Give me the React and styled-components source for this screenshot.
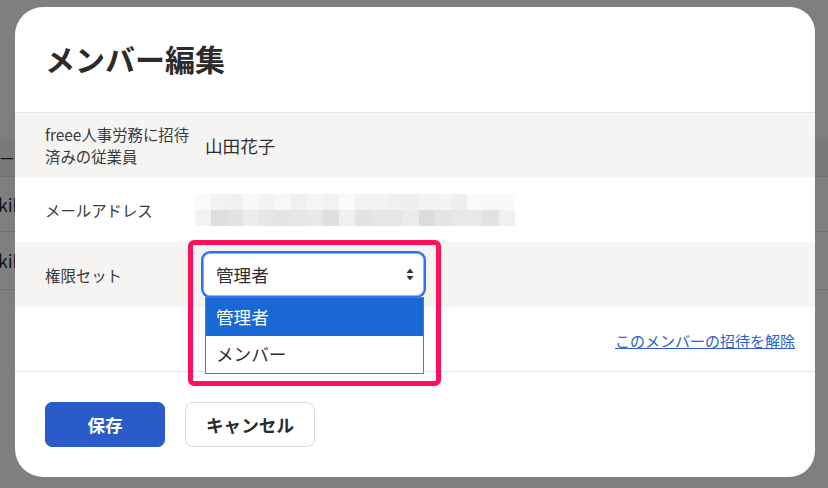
import styled, { createGlobalStyle } from "styled-components";

const GlobalStyle = createGlobalStyle`
  html, body {
    margin: 0;
    padding: 0;
    width: 828px;
    height: 488px;
    overflow: hidden;
    background: #ffffff;
    font-family: "Noto Sans CJK JP", "Noto Sans", sans-serif;
  }
`;

const Page = styled.div`
  padding-top: 139px;
  width: 828px;
  height: 488px;
  box-sizing: border-box;
`;

const BgRow = styled.div`
  display: flex;
  align-items: center;
  height: ${({ h }) => h}px;
  border-bottom: 1px solid #e2e2e2;
  background: ${({ head }) => (head ? "#f3f3f3" : "#ffffff")};
  color: #1c2a44;
  font-size: ${({ head }) => (head ? "15.4px" : "17.6px")};
  white-space: nowrap;
  overflow: hidden;
`;

const BgText = styled.span`
  margin-left: ${({ indent }) => indent}px;
`;

const Overlay = styled.div`
  position: fixed;
  inset: 0;
  background: rgba(0, 0, 0, 0.5);
  padding: 7px 13px 11px 15px;
  display: flex;
`;

const Modal = styled.div`
  width: 800px;
  height: 470px;
  background: #ffffff;
  border-radius: 28px 25px 26px 28px;
  display: flex;
  flex-direction: column;
`;

const Header = styled.div`
  height: 101px;
  padding: 0 30px 4px;
  display: flex;
  align-items: center;
  border-bottom: 1px solid #e6e6e6;
`;

const Title = styled.h1`
  margin: 0;
  font-size: 30px;
  font-weight: 700;
  color: #2b2b2b;
`;

const Row = styled.div`
  height: ${({ h }) => h}px;
  display: grid;
  grid-template-columns: 160px 1fr;
  align-items: center;
  padding-left: 30px;
  background: ${({ striped }) => (striped ? "#f5f4f2" : "#ffffff")};
`;

const Label = styled.div`
  font-size: 15.4px;
  line-height: 22px;
  color: #3a3a3a;
`;

const Value = styled.div`
  font-size: 17.6px;
  color: #2e2e2e;
`;

const Mosaic = styled.div`
  margin-left: -10px;
  display: grid;
  grid-template-columns: repeat(20, 16px);
  grid-auto-rows: 16px;
  width: 320px;
`;

const Tile = styled.div`
  background: ${({ c }) => c};
`;

const SelectWrap = styled.div`
  position: relative;
  margin-left: -2px;
  width: 221px;
  height: 43px;
`;

const SelectBox = styled.div`
  box-sizing: border-box;
  width: 100%;
  height: 100%;
  border: 1px solid #8ab4f8;
  border-radius: 7px;
  box-shadow: 0 0 0 2px #2f6ff0;
  background: #ffffff;
  display: flex;
  align-items: center;
  justify-content: space-between;
  padding: 0 9px 0 12px;
  font-size: 17.6px;
  color: #2e2e2e;
`;

const Options = styled.ul`
  position: absolute;
  top: 44px;
  left: 2px;
  width: 219px;
  margin: 0;
  padding: 0;
  list-style: none;
  border: 1px solid #767676;
  background: #ffffff;
  box-sizing: border-box;
  z-index: 2;
`;

const Option = styled.li`
  height: ${({ h }) => h}px;
  display: flex;
  align-items: center;
  padding: 0 0 2px 10px;
  box-sizing: border-box;
  font-size: 17.6px;
  background: ${({ active }) => (active ? "#1a68d3" : "#ffffff")};
  color: ${({ active }) => (active ? "#ffffff" : "#2e2e2e")};
`;

const Highlight = styled.div`
  position: absolute;
  left: -15px;
  top: -13px;
  width: 253px;
  height: 146px;
  box-sizing: border-box;
  border: 5px solid #ff105a;
  border-radius: 6px;
  z-index: 3;
  pointer-events: none;
`;

const LinkArea = styled.div`
  height: 65px;
  box-sizing: border-box;
  display: flex;
  align-items: center;
  justify-content: flex-end;
  padding: 2px 20px 0 0;
  border-bottom: 1px solid #e6e6e6;
`;

const Link = styled.a`
  font-size: 15px;
  color: #2c5fd3;
  text-decoration: underline;
  cursor: pointer;
`;

const Footer = styled.div`
  display: flex;
  gap: 20px;
  padding: 30px 30px 0;
`;

const Button = styled.button`
  height: 45px;
  width: ${({ w }) => w}px;
  border-radius: ${({ primary }) => (primary ? "7px" : "8px")};
  border: 1px solid ${({ primary }) => (primary ? "#2a5bc8" : "#dadada")};
  background: ${({ primary }) => (primary ? "#2a5bc8" : "#ffffff")};
  color: ${({ primary }) => (primary ? "#ffffff" : "#2b2b2b")};
  font-family: inherit;
  font-size: 17.6px;
  font-weight: 700;
  padding: 0;
`;

const top = [
  "#fafafa", "#f2f2f1", "#f0f0f0", "#f8f8f6", "#f2f2f2", "#f7f7f5", "#f0f0f0",
  "#f5f5f5", "#f2f2f2", "#fafafa", "#f2f2f2", "#f3f3f3", "#f0f0f0", "#eeeeee",
  "#f3f3f1", "#f4f4f4", "#efefef", "#fafafa", "#f8f8f8", "#f9f9f9",
];
const bottom = [
  "#f2f2f2", "#dedede", "#e2e2e2", "#ececec", "#e6e6e6", "#e4e4e4", "#e6e6e6",
  "#e8e8e8", "#dfdfdf", "#f0f0ee", "#e2e2e2", "#e6e6e6", "#e6e6e6", "#ebebeb",
  "#dcdcdc", "#e4e4e4", "#e8e8e8", "#e8e8e8", "#e2e2e2", "#f0f0f0",
];

const SortArrows = () => (
  <svg width="8" height="13" viewBox="0 0 8 13">
    <path d="M4 0.5 L7.5 5 H0.5 Z" fill="#333" />
    <path d="M4 12.5 L7.5 8 H0.5 Z" fill="#333" />
  </svg>
);

export default function App() {
  return (
    <>
      <GlobalStyle />
      <Page>
        <BgRow h={37} head>
          <BgText indent={-47}>メンバー</BgText>
        </BgRow>
        <BgRow h={54}>
          <BgText indent={-2}>kihara@example.com</BgText>
        </BgRow>
        <BgRow h={57}>
          <BgText indent={-2}>kihara@example.com</BgText>
        </BgRow>
      </Page>
      <Overlay>
        <Modal>
          <Header>
            <Title>メンバー編集</Title>
          </Header>
          <Row h={64} striped>
            <Label>
              freee人事労務に招待
              <br />
              済みの従業員
            </Label>
            <Value>山田花子</Value>
          </Row>
          <Row h={65}>
            <Label>メールアドレス</Label>
            <Mosaic>
              {[...top, ...bottom].map((c, i) => (
                <Tile key={i} c={c} />
              ))}
            </Mosaic>
          </Row>
          <Row h={65} striped>
            <Label>権限セット</Label>
            <SelectWrap>
              <SelectBox>
                <span>管理者</span>
                <SortArrows />
              </SelectBox>
              <Options>
                <Option h={38} active>
                  管理者
                </Option>
                <Option h={37}>メンバー</Option>
              </Options>
              <Highlight />
            </SelectWrap>
          </Row>
          <LinkArea>
            <Link>このメンバーの招待を解除</Link>
          </LinkArea>
          <Footer>
            <Button primary w={120}>
              保存
            </Button>
            <Button w={130}>キャンセル</Button>
          </Footer>
        </Modal>
      </Overlay>
    </>
  );
}
